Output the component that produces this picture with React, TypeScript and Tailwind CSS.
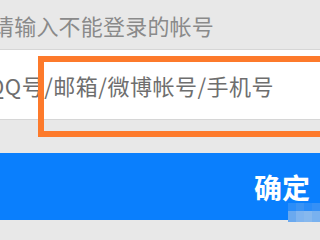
import React from 'react';

const cjk = "font-['Noto_Sans_CJK_SC','Noto_Sans',sans-serif]";

// pixelated watermark in the lower right corner of the button
const mosaic: { c: string; tall?: boolean }[] = [
  { c: '#2a8df9' },
  { c: '#3a93f5' },
  { c: '#2a8cf9' },
  { c: '#3590f6' },
  { c: '#6aa9ef', tall: true },
  { c: '#7fb4ef', tall: true },
  { c: '#86b8ee', tall: true },
  { c: '#78b1ef', tall: true },
];

export default function App() {
  return (
    <div className={`relative w-[320px] h-[240px] overflow-hidden bg-[#e8e8e8] ${cjk}`}>
      <div className="h-[49px] flex items-center">
        <span className="-ml-[8px] whitespace-nowrap text-[22px] tracking-[0.2px] leading-none text-[#8a8a8a]">
          请输入不能登录的帐号
        </span>
      </div>

      <div className="h-[71px] bg-white border-y border-[#d6d6d6] flex items-center">
        <span className="-ml-[12px] whitespace-nowrap text-[22px] tracking-[0.5px] leading-none text-[#6e6e6e]">
          QQ号/邮箱/微博帐号/手机号
        </span>
      </div>

      <div className="h-[33px]" />

      <div className="relative h-[67px] bg-[#0a7ffd] flex items-center justify-end pr-[10px]">
        <span className="text-[28px] font-bold leading-none text-white">确定</span>

        <div className="absolute right-0 top-[50px] w-[32px] grid grid-cols-4">
          {mosaic.map((m, i) => (
            <div
              key={i}
              className={m.tall ? 'h-[11px]' : 'h-[8px]'}
              style={{ background: m.c }}
            />
          ))}
        </div>
      </div>

      {/* orange highlight frame */}
      <div className="absolute left-[38px] top-[56px] w-[300px] h-[81px] border-[6px] border-[#fd7a2b]" />
    </div>
  );
}
